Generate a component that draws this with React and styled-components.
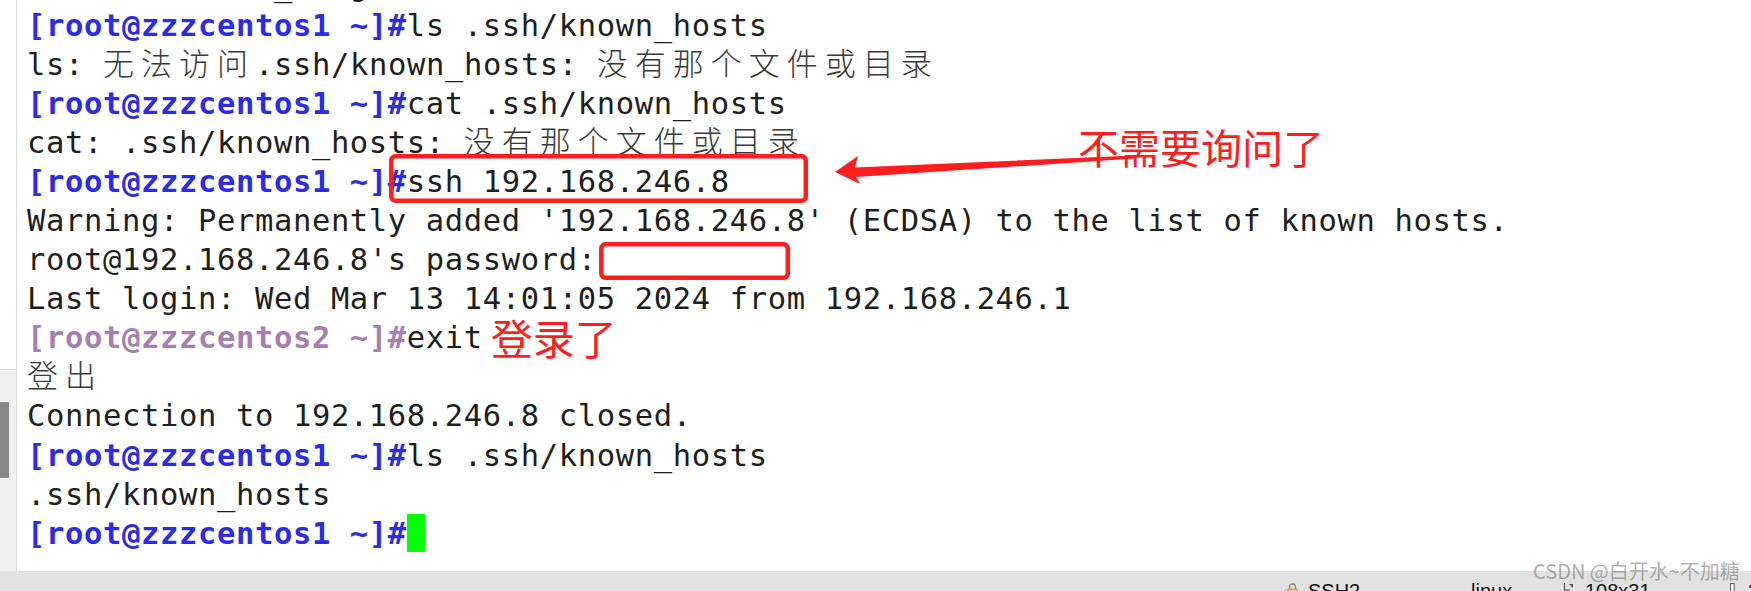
import React from "react";
import styled, { createGlobalStyle } from "styled-components";

const Global = createGlobalStyle`
  html, body { margin: 0; padding: 0; background: #fff; overflow: hidden; }
  #root { width: 1751px; height: 591px; }
`;

const RED = "#ff1e1e";

const Page = styled.div`
  position: relative;
  width: 1751px;
  height: 591px;
  display: flex;
  flex-direction: column;
  background: #ffffff;
  overflow: hidden;
`;

const Body = styled.div`
  flex: 1;
  min-height: 0;
  display: flex;
`;

const Gutter = styled.div`
  width: 16px;
  flex-shrink: 0;
  border-right: 1px solid #dadada;
  display: flex;
  flex-direction: column;
  justify-content: flex-end;
`;

const GutterPanel = styled.div`
  height: 202px;
  box-sizing: border-box;
  background: #f0f0f0;
  border-top: 1px solid #dedede;
  padding-top: 32px;
`;

const Thumb = styled.div`
  width: 9px;
  height: 76px;
  background: #888888;
`;

const Terminal = styled.div`
  flex: 1;
  overflow: hidden;
  padding-left: 10px;
  font-family: "DejaVu Sans Mono", monospace;
  font-size: 30.5px;
  letter-spacing: 0.63px;
  color: #1e1e1e;
`;

const Lines = styled.div`
  margin-top: -33.6px;
`;

const Line = styled.div`
  height: 39.1px;
  line-height: 39.1px;
  white-space: pre;
`;

const Prompt = styled.span`
  font-weight: bold;
  color: ${(p) => p.$color};
`;

const Cjk = styled.span`
  font-family: "Noto Sans CJK SC", sans-serif;
  font-size: 31px;
  line-height: 1;
  font-weight: 300;
  letter-spacing: 7px;
  color: #3a3a3a;
`;

const Note = styled.span`
  font-family: "Noto Sans CJK SC", sans-serif;
  font-size: 42px;
  line-height: 0;
  letter-spacing: 0;
  color: ${RED};
  margin-left: 8px;
  vertical-align: -7px;
`;

const Cursor = styled.span`
  display: inline-block;
  width: 18px;
  height: 38px;
  background: #00ff00;
  vertical-align: top;
`;

const StatusBar = styled.div`
  height: 20px;
  flex-shrink: 0;
  box-sizing: border-box;
  background: #e1e1e1;
  display: flex;
  align-items: flex-start;
  padding: 10px 0 0 1287px;
  overflow: hidden;
  font-family: "Liberation Sans", Arial, sans-serif;
  font-size: 20px;
  line-height: 20px;
  color: #111;
`;

const StatusItem = styled.div`
  width: ${(p) => p.$w}px;
  flex-shrink: 0;
  display: flex;
  align-items: flex-start;
  gap: ${(p) => p.$gap || 0}px;
  white-space: nowrap;
`;

const StatusIcon = styled.svg`
  flex-shrink: 0;
  margin-top: 2px;
`;

const Overlay = styled.svg`
  position: absolute;
  left: 0;
  top: 0;
  pointer-events: none;
`;

const Callout = styled.div`
  position: absolute;
  left: ${(p) => p.$x}px;
  top: ${(p) => p.$y}px;
  font-family: "Noto Sans CJK SC", sans-serif;
  font-size: ${(p) => p.$size}px;
  line-height: 1;
  color: ${(p) => p.$color};
  white-space: nowrap;
  pointer-events: none;
`;

const BLUE = "#2b2bea";
const PURPLE = "#a57fb2";

const P1 = () => <Prompt $color={BLUE}>[root@zzzcentos1 ~]#</Prompt>;

export default function App() {
  return (
    <Page>
      <Global />
      <Body>
        <Gutter>
          <GutterPanel>
            <Thumb />
          </GutterPanel>
        </Gutter>
        <Terminal>
          <Lines>
            <Line>{"             _   g    ,"}</Line>
            <Line>
              <P1 />ls .ssh/known_hosts
            </Line>
            <Line>
              {"ls: "}
              <Cjk>无法访问</Cjk>
              {".ssh/known_hosts: "}
              <Cjk>没有那个文件或目录</Cjk>
            </Line>
            <Line>
              <P1 />cat .ssh/known_hosts
            </Line>
            <Line>
              {"cat: .ssh/known_hosts: "}
              <Cjk>没有那个文件或目录</Cjk>
            </Line>
            <Line>
              <P1 />ssh 192.168.246.8
            </Line>
            <Line>
              Warning: Permanently added '192.168.246.8' (ECDSA) to the list of known hosts.
            </Line>
            <Line>root@192.168.246.8's password:</Line>
            <Line>Last login: Wed Mar 13 14:01:05 2024 from 192.168.246.1</Line>
            <Line>
              <Prompt $color={PURPLE}>[root@zzzcentos2 ~]#</Prompt>exit
              <Note>登录了</Note>
            </Line>
            <Line>
              <Cjk>登出</Cjk>
            </Line>
            <Line>Connection to 192.168.246.8 closed.</Line>
            <Line>
              <P1 />ls .ssh/known_hosts
            </Line>
            <Line>.ssh/known_hosts</Line>
            <Line>
              <P1 />
              <Cursor />
            </Line>
          </Lines>
        </Terminal>
      </Body>
      <StatusBar>
        <StatusItem $w={184} $gap={10}>
          <StatusIcon width="11" height="14" viewBox="0 0 11 14">
            <path d="M2.5 6 V4 a3 3 0 0 1 6 0 V6" fill="none" stroke="#8a8a8a" strokeWidth="1.3" />
            <rect x="0.5" y="6" width="10" height="7.5" rx="1" fill="#e9bd7f" stroke="#b98a4a" strokeWidth="0.8" />
          </StatusIcon>
          <span>SSH2</span>
        </StatusItem>
        <StatusItem $w={92}>
          <span>linux</span>
        </StatusItem>
        <StatusItem $w={167} $gap={11}>
          <StatusIcon width="11" height="14" viewBox="0 0 11 14">
            <path d="M1.5 0 V14 M1.5 7 H7" fill="none" stroke="#555" strokeWidth="1.2" />
            <path d="M6 1 L10 1 L10 5 Z" fill="#555" />
          </StatusIcon>
          <span>108x31</span>
        </StatusItem>
        <StatusItem $w={40} $gap={13}>
          <StatusIcon width="5" height="14" viewBox="0 0 5 14">
            <rect x="0.6" y="0.6" width="3.6" height="13" fill="#fff" stroke="#555" strokeWidth="1" />
          </StatusIcon>
          <span>31,1</span>
        </StatusItem>
      </StatusBar>

      <Overlay width="1751" height="591" viewBox="0 0 1751 591">
        <rect x="391.3" y="156.3" width="414.5" height="44.5" rx="4" fill="none" stroke={RED} strokeWidth="4.5" />
        <rect x="601.3" y="244.3" width="186.5" height="33.5" rx="4" fill="none" stroke={RED} strokeWidth="4.5" />
        <polygon
          points="835,172 858,156 855,167.5 1135,155.5 1135,158.5 856,177 860,184"
          fill={RED}
        />
      </Overlay>
      <Callout $x={1078} $y={125.5} $size={41} $color={RED}>
        不需要询问了
      </Callout>
      <Callout $x={1533} $y={561} $size={20} $color="rgba(110,110,110,0.55)">
        CSDN @白开水~不加糖
      </Callout>
    </Page>
  );
}
